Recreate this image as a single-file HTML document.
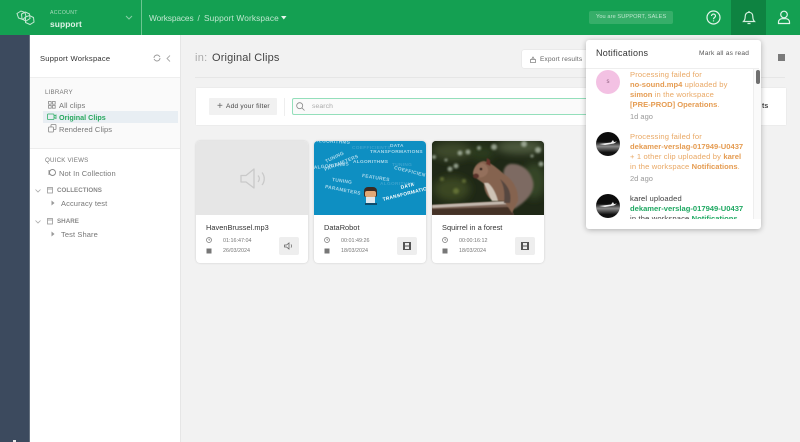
<!DOCTYPE html>
<html><head><meta charset="utf-8">
<style>
html,body{margin:0;padding:0;width:800px;height:442px;overflow:hidden;background:#f2f2f2;font-family:"Liberation Sans",sans-serif;color:#3a3a3a}
#w{position:absolute;left:0;top:0;width:800px;height:442px;overflow:hidden;background:#f2f2f2;filter:blur(.3px)}
.a{position:absolute;white-space:nowrap}
svg{position:absolute;overflow:visible}
.card{position:absolute;top:141px;width:112px;height:122px;background:#fff;border-radius:4px;box-shadow:0 0 2px rgba(0,0,0,.16);overflow:hidden}
.thumb{position:absolute;left:0;top:0;width:112px;height:74px;overflow:hidden}
.title{position:absolute;left:10px;top:82px;font-size:7.4px;color:#333;letter-spacing:.02px;white-space:nowrap}
.meta{position:absolute;left:27px;font-size:5.4px;color:#777;white-space:nowrap}
.btn{position:absolute;left:83px;top:96px;width:20px;height:18px;background:#eee;border-radius:2px}
.side{font-size:7.5px;color:#777;letter-spacing:.1px}
.head{font-size:6.2px;color:#777;letter-spacing:.2px}
.n{font-size:7.6px;line-height:10px;color:#e9a865;letter-spacing:.15px;position:absolute;left:44px;white-space:nowrap}
.n b{font-weight:bold;color:#e59c52;letter-spacing:0}
.ago{font-size:7.5px;color:#999;position:absolute;left:44px}
.w{position:absolute;color:rgba(205,232,245,.8);font-weight:bold;white-space:nowrap;font-size:4.800px;letter-spacing:.3px;transform-origin:left center}
.f{color:rgba(160,210,235,.3)}
</style></head><body><div id="w">

<!-- top bar -->
<div class="a" style="left:0;top:0;width:800px;height:35px;background:#14a052"></div>
<div class="a" style="left:141px;top:0;width:1px;height:35px;background:#6cc591"></div>
<svg style="left:16px;top:10px" width="19" height="16" fill="none" stroke="#c3e8d2" stroke-width="1"><path d="M1 3.500l4-2.500 4 1.500 1 4-3 3-4.500-1.500z"/><path d="M5.500 4l4-2 4 2 .5 4.500-4 2.500-4-2z"/><path d="M9.500 7l4-1.500 4 2 .5 4.500-4 2.500-4.500-2z"/></svg>
<div class="a" style="left:50px;top:10px;font-size:5.2px;color:#a9dcbd;letter-spacing:.3px">ACCOUNT</div>
<div class="a" style="left:50px;top:18.500px;font-size:8.400px;font-weight:bold;color:#dff3e7;letter-spacing:.1px">support</div>
<svg style="left:125px;top:15px" width="8" height="5" fill="none" stroke="#86cfa5" stroke-width="1"><path d="M1 1l3 3 3-3"/></svg>
<div class="a" style="left:149px;top:13px;font-size:8.300px;color:#bfe6cf;letter-spacing:-.1px">Workspaces</div>
<div class="a" style="left:197.500px;top:13px;font-size:8.300px;color:#bfe6cf">/</div>
<div class="a" style="left:204px;top:13px;font-size:8.300px;color:#bfe6cf;letter-spacing:.13px">Support Workspace</div>
<svg style="left:281px;top:16px" width="6" height="4" fill="#e6f6ec"><path d="M0 0h5.500l-2.700 3.500z"/></svg>
<div class="a" style="left:589px;top:11px;width:84px;height:13px;background:#36ae69;border-radius:2px"></div>
<div class="a" style="left:596px;top:14px;font-size:5.600px;color:#bfe8cf;letter-spacing:.1px">You are SUPPORT, SALES</div>
<svg style="left:706px;top:10px" width="15" height="15" fill="none" stroke="#e3f5ea" stroke-width="1.200"><circle cx="7.500" cy="7.500" r="6.500"/><path d="M5.500 6c0-2.600 4-2.600 4 0 0 1.500-2 1.500-2 3.200M7.500 10.400v1"/></svg>
<div class="a" style="left:731px;top:0;width:35px;height:35px;background:#0e8341"></div>
<svg style="left:742px;top:10px" width="14" height="15" fill="none" stroke="#d5efdf" stroke-width="1.200"><path d="M1.500 11.500c1.300-1.300 1.700-2.500 1.700-5 0-2.500 1.500-4.200 3.800-4.200s3.800 1.700 3.800 4.200c0 2.500.4 3.700 1.700 5z"/><path d="M5.500 13.500h3M7 1v1.300"/></svg>
<svg style="left:777px;top:10px" width="14" height="15" fill="none" stroke="#e3f5ea" stroke-width="1.200"><circle cx="7" cy="4.500" r="3.300"/><path d="M1.500 13.500v-1.500c0-2 2-3.300 3.500-3.300h4c1.500 0 3.500 1.300 3.500 3.300v1.500z"/></svg>

<!-- dark rail -->
<div class="a" style="left:0;top:35px;width:29px;height:407px;background:#3c4a5e"></div>
<div class="a" style="left:29px;top:35px;width:1px;height:407px;background:#65717f"></div>
<div class="a" style="left:13px;top:440px;width:3px;height:2px;background:#e8e8e8"></div>

<!-- sidebar -->
<div class="a" style="left:30px;top:35px;width:150px;height:407px;background:#fff"></div>
<div class="a" style="left:180px;top:35px;width:1px;height:407px;background:#e6e6e6"></div>
<div class="a" style="left:30px;top:77px;width:150px;height:71px;background:#fafafa"></div>
<div class="a" style="left:30px;top:77px;width:150px;height:1px;background:#eeeeee"></div>
<div class="a" style="left:30px;top:148px;width:150px;height:1px;background:#ececec"></div>
<div class="a" style="left:40px;top:54px;font-size:7.600px;color:#333;letter-spacing:.22px">Support Workspace</div>
<svg style="left:153px;top:54px" width="8" height="8" fill="none" stroke="#999" stroke-width=".9"><path d="M1 4a3 3 0 0 1 5-2.200L7 3M7 4a3 3 0 0 1-5 2.200L1 5"/></svg>
<svg style="left:166px;top:55px" width="5" height="7" fill="none" stroke="#aaa" stroke-width=".9"><path d="M4 .5L1 3.500l3 3"/></svg>

<div class="a head" style="left:45px;top:88.500px">LIBRARY</div>
<div class="a" style="left:43px;top:111px;width:135px;height:12px;background:#e8eef3"></div>
<svg style="left:48px;top:101px" width="8" height="8" fill="none" stroke="#888" stroke-width=".8"><rect x=".5" y=".5" width="2.700" height="2.700"/><rect x="4.500" y=".5" width="2.700" height="2.700"/><rect x=".5" y="4.500" width="2.700" height="2.700"/><rect x="4.500" y="4.500" width="2.700" height="2.700"/></svg>
<div class="a side" style="left:59px;top:100.500px">All clips</div>
<svg style="left:47px;top:113px" width="10" height="8" fill="none" stroke="#2eae66" stroke-width=".8"><rect x=".5" y="1" width="6.500" height="5.500" rx=".7"/><path d="M7 3l2-1v3.500l-2-1"/></svg>
<div class="a side" style="left:59px;top:112.500px;color:#27a85f;font-weight:bold;font-size:7.200px;letter-spacing:0">Original Clips</div>
<svg style="left:48px;top:124px" width="9" height="9" fill="none" stroke="#888" stroke-width=".8"><rect x="3" y=".5" width="5" height="5" rx=".7"/><rect x=".5" y="3" width="5" height="5" rx=".7" fill="#fafafa"/></svg>
<div class="a side" style="left:59px;top:124.500px">Rendered Clips</div>

<div class="a head" style="left:45px;top:156.500px">QUICK VIEWS</div>
<svg style="left:48px;top:168px" width="8" height="9" fill="none" stroke="#888" stroke-width=".9"><circle cx="4.500" cy="4.500" r="3"/><path d="M1 2v5"/></svg>
<div class="a side" style="left:59px;top:168.500px">Not In Collection</div>

<svg style="left:35px;top:189px" width="6" height="4" fill="none" stroke="#aaa" stroke-width=".8"><path d="M.5.5L3 3 5.500.5"/></svg>
<svg style="left:47px;top:186.500px" width="6" height="7" fill="none" stroke="#999" stroke-width=".8"><rect x=".5" y=".5" width="5" height="5.500"/><path d="M.5 2h5"/></svg>
<div class="a head" style="left:57px;top:186.500px;font-weight:bold;color:#888;letter-spacing:.05px">COLLECTIONS</div>
<svg style="left:51px;top:200px" width="4" height="6" fill="#999"><path d="M.5.5L3.500 3 .5 5.500z"/></svg>
<div class="a side" style="left:61px;top:198.500px">Accuracy test</div>

<svg style="left:35px;top:220px" width="6" height="4" fill="none" stroke="#aaa" stroke-width=".8"><path d="M.5.5L3 3 5.500.5"/></svg>
<svg style="left:47px;top:217.500px" width="6" height="7" fill="none" stroke="#999" stroke-width=".8"><rect x=".5" y=".5" width="5" height="5.500"/><path d="M.5 2h5"/></svg>
<div class="a head" style="left:57px;top:217.500px;font-weight:bold;color:#888;letter-spacing:.05px">SHARE</div>
<svg style="left:51px;top:231px" width="4" height="6" fill="#999"><path d="M.5.5L3.500 3 .5 5.500z"/></svg>
<div class="a side" style="left:61px;top:229.500px">Test Share</div>

<!-- main header -->
<div class="a" style="left:195px;top:52px;font-size:11px;color:#aaa;letter-spacing:.3px">in:</div>
<div class="a" style="left:212px;top:52px;font-size:11px;color:#444;letter-spacing:.15px">Original Clips</div>
<div class="a" style="left:522px;top:50px;width:70px;height:18px;background:#fff;box-shadow:0 0 1px rgba(0,0,0,.2);border-radius:2px"></div>
<svg style="left:530px;top:55.500px" width="6" height="7" fill="none" stroke="#888" stroke-width=".8"><path d="M.5 3.500h5v3h-5zM1.500 3.500L3 1l1.500 2.500"/></svg>
<div class="a" style="left:540px;top:55.500px;font-size:6.500px;color:#666;letter-spacing:.18px">Export results</div>
<div class="a" style="left:195px;top:77px;width:590px;height:1px;background:#e6e6e6"></div>
<div class="a" style="left:778px;top:54px;width:7px;height:7px;background:#7a7a7a"></div>

<!-- filter panel -->
<div class="a" style="left:196px;top:88px;width:590px;height:37px;background:#fff;box-shadow:0 0 1px rgba(0,0,0,.12)"></div>
<div class="a" style="left:209px;top:98px;width:68px;height:17px;background:#f1f1f1;border-radius:1px"></div>
<div class="a" style="left:217px;top:100.500px;font-size:10px;color:#666">+</div>
<div class="a" style="left:226px;top:102.500px;font-size:6.500px;color:#444;letter-spacing:.25px">Add your filter</div>
<div class="a" style="left:284px;top:98px;width:1px;height:18px;background:#eee"></div>
<div class="a" style="left:292px;top:98px;width:320px;height:14.500px;background:#fafafa;border:1.500px solid #94dfbb;border-radius:2px"></div>
<svg style="left:296px;top:102px" width="9" height="9" fill="none" stroke="#888" stroke-width=".8"><circle cx="3.700" cy="3.700" r="3"/><path d="M6 6l2.500 2.500"/></svg>
<div class="a" style="left:312px;top:102.500px;font-size:6.800px;color:#aaa;letter-spacing:.1px">search</div>
<div class="a" style="left:762px;top:103px;font-size:7px;color:#444;font-weight:bold">ts</div>

<!-- card 1 -->
<div class="card" style="left:196px">
  <div class="thumb" style="background:#e6e6e6">
    <svg style="left:44px;top:27px" width="28" height="22" fill="none" stroke="#c9c9c9" stroke-width="1.300"><path d="M1 7.500h5L14 1v19l-8-6H1z" stroke-linejoin="round"/><path d="M18 7.500c1.800 2 1.800 4.500 0 6.500M22 4.500c3 3.500 3 9 0 12.500"/></svg>
  </div>
  <div class="title">HavenBrussel.mp3</div>
  <svg style="left:10px;top:96px" width="6" height="6" fill="none" stroke="#777" stroke-width=".7"><circle cx="3" cy="3" r="2.500"/><path d="M3 1.500V3h1.200"/></svg>
  <div class="meta" style="top:96.500px">01:16:47:04</div>
  <svg style="left:10px;top:107px" width="6" height="6" fill="#777"><path d="M.5.5h5v5h-5z"/></svg>
  <div class="meta" style="top:106.500px">26/03/2024</div>
  <div class="btn"><svg style="left:5px;top:5px" width="10" height="8" fill="none" stroke="#666" stroke-width=".8"><path d="M.5 3h2L5 1v6L2.500 5h-2zM7 2.500c.7.8.7 2.200 0 3"/></svg></div>
</div>

<!-- card 2 -->
<div class="card" style="left:314px">
  <div class="thumb" style="background:#0e8fc2">
    <div class="w f" style="left:38px;top:5px">COEFFICIENTS</div>
    <div class="w f" style="left:78px;top:22px">TUNING</div>
    <div class="w f" style="left:66px;top:41px">ALGORITHMS</div>
    <div class="w" style="left:1px;top:-2px;transform:rotate(3deg)">ALGORITHMS</div>
    <div class="w" style="left:76px;top:3px">DATA</div>
    <div class="w" style="left:56px;top:9px">TRANSFORMATIONS</div>
    <div class="w" style="left:12px;top:19px;transform:rotate(-26deg)">TUNING</div>
    <div class="w" style="left:11px;top:27px;transform:rotate(-22deg)">PARAMETERS</div>
    <div class="w" style="left:0;top:25px;transform:rotate(-6deg)">ALGORITHMS</div>
    <div class="w" style="left:39px;top:19px">ALGORITHMS</div>
    <div class="w" style="left:80px;top:25px;transform:rotate(14deg)">COEFFICIENTS</div>
    <div class="w" style="left:48px;top:33px;transform:rotate(9deg)">FEATURES</div>
    <div class="w" style="left:18px;top:37px;transform:rotate(8deg)">TUNING</div>
    <div class="w" style="left:11px;top:44px;transform:rotate(11deg)">PARAMETERS</div>
    <div class="w" style="left:87px;top:45px;transform:rotate(-14deg);color:#fff">DATA</div>
    <div class="w" style="left:69px;top:57px;transform:rotate(-14deg);color:#fff">TRANSFORMATIONS</div>
    <div class="a" style="left:50px;top:46px;width:13px;height:10px;background:#3a2a22;border-radius:4px 4px 2px 2px"></div>
    <div class="a" style="left:51px;top:50px;width:11px;height:6px;background:#e0a876;border-radius:2px"></div>
    <div class="a" style="left:52px;top:56px;width:9px;height:6px;background:#dfe8ee"></div>
    <div class="a" style="left:51px;top:62px;width:12px;height:2px;background:#123;opacity:.6"></div>
  </div>
  <div class="title">DataRobot</div>
  <svg style="left:10px;top:96px" width="6" height="6" fill="none" stroke="#777" stroke-width=".7"><circle cx="3" cy="3" r="2.500"/><path d="M3 1.500V3h1.200"/></svg>
  <div class="meta" style="top:96.500px">00:01:49:26</div>
  <svg style="left:10px;top:107px" width="6" height="6" fill="#777"><path d="M.5.5h5v5h-5z"/></svg>
  <div class="meta" style="top:106.500px">18/03/2024</div>
  <div class="btn"><svg style="left:6px;top:5px" width="8" height="8" fill="#555"><path d="M0 0h8v8H0z"/><path d="M2 1h4v2.500H2zM2 4.500h4V7H2z" fill="#eee"/></svg></div>
</div>

<!-- card 3 -->
<div class="card" style="left:432px">
  <div class="thumb" style="background:#2b3320">
    <svg style="left:0;top:0" width="112" height="74">
      <defs><filter id="b"><feGaussianBlur stdDeviation="4"/></filter><filter id="c"><feGaussianBlur stdDeviation="1.100"/></filter><filter id="d"><feGaussianBlur stdDeviation=".6"/></filter></defs>
      <rect width="112" height="74" fill="#1f2816"/>
      <g filter="url(#b)">
        <ellipse cx="20" cy="10" rx="20" ry="9" fill="#3e4a2a"/>
        <ellipse cx="88" cy="6" rx="24" ry="7" fill="#4d5a3c"/>
        <ellipse cx="20" cy="48" rx="18" ry="12" fill="#3a4620"/>
        <ellipse cx="102" cy="40" rx="12" ry="18" fill="#364527"/>
        <ellipse cx="50" cy="12" rx="12" ry="8" fill="#2c3a1a"/>
      </g>
      <g filter="url(#c)" fill="#a7b3a0" opacity=".85">
        <circle cx="2" cy="16" r="2"/><circle cx="28" cy="12" r="2.500"/><circle cx="36" cy="11" r="2.500"/><circle cx="47" cy="7" r="2"/><circle cx="62" cy="6" r="3"/><circle cx="24" cy="25" r="2.500"/><circle cx="18" cy="28" r="2.500"/><circle cx="92" cy="3" r="3"/><circle cx="106" cy="9" r="3"/><circle cx="109" cy="23" r="2.500"/><circle cx="14" cy="19" r="1.500"/><circle cx="100" cy="15" r="1.500"/>
      </g>
      <g filter="url(#c)" fill="#6d7a3a" opacity=".8"><circle cx="24" cy="50" r="3"/><circle cx="10" cy="38" r="2"/><circle cx="32" cy="40" r="2"/></g>
      <path d="M0 64L75 60 82 74H0z" fill="#7a6254" filter="url(#d)"/>
      <path d="M0 68L78 66 82 74H0z" fill="#443228" filter="url(#d)"/>
      <path d="M0 64L75 60 77 63 0 67z" fill="#c2b7ad" filter="url(#d)"/>
      <g filter="url(#c)">
        <path d="M82 68C92 62 104 52 101 40 98 28 88 22 78 23 70 25 70 36 74 44Z" fill="#7d6a62"/>
      </g>
      <g filter="url(#d)">
        <path d="M52 20C44 21 41 28 41 33 43 38 48 39 52 43 52 50 56 58 62 60L72 60 80 72 86 60C87 48 80 38 72 33 66 28 60 22 52 20Z" fill="#85634f"/>
        <path d="M50 22C44 24 41 29 41 33 44 37 50 38 54 34 58 30 56 24 50 22Z" fill="#94705c"/>
        <path d="M52 42C55 48 57 55 60 60L66 60C64 52 60 45 56 42Z" fill="#cfc3b5"/>
        <path d="M54 23l1-6 3 2 .5 6z" fill="#6b322c"/>
        <circle cx="49" cy="28" r="1.300" fill="#171010"/>
        <ellipse cx="44" cy="35" rx="3" ry="2.500" fill="#5a322a"/>
        <path d="M68 38C76 44 80 52 78 62L72 62C73 52 72 45 68 38Z" fill="#57463f"/>
      </g>
    </svg>
  </div>
  <div class="title">Squirrel in a forest</div>
  <svg style="left:10px;top:96px" width="6" height="6" fill="none" stroke="#777" stroke-width=".7"><circle cx="3" cy="3" r="2.500"/><path d="M3 1.500V3h1.200"/></svg>
  <div class="meta" style="top:96.500px">00:00:16:12</div>
  <svg style="left:10px;top:107px" width="6" height="6" fill="#777"><path d="M.5.5h5v5h-5z"/></svg>
  <div class="meta" style="top:106.500px">18/03/2024</div>
  <div class="btn"><svg style="left:6px;top:5px" width="8" height="8" fill="#555"><path d="M0 0h8v8H0z"/><path d="M2 1h4v2.500H2zM2 4.500h4V7H2z" fill="#eee"/></svg></div>
</div>

<!-- notifications -->
<div class="a" style="left:586px;top:40px;width:175px;height:189px;background:#fff;border-radius:3px;box-shadow:0 1px 6px rgba(0,0,0,.28);overflow:hidden">
  <div class="a" style="left:10px;top:8px;font-size:9px;color:#333;letter-spacing:.25px">Notifications</div>
  <div class="a" style="left:113px;top:9.500px;font-size:6.600px;color:#555;letter-spacing:.2px">Mark all as read</div>
  <div class="a" style="left:0;top:28px;width:173px;height:1px;background:#eee"></div>
  <div class="a" style="left:0;top:29px;width:167px;height:150px;overflow:hidden">
    <div class="a" style="left:10px;top:1px;width:24px;height:24px;border-radius:50%;background:#f3c1e3;color:#8a5a7a;font-size:6px;text-align:center;line-height:24px">s</div>
    <div class="n" style="top:1px">Processing failed for<br><b>no-sound.mp4</b> uploaded by<br><b>simon</b> in the workspace<br><b>[PRE-PROD] Operations</b>.</div>
    <div class="ago" style="top:43px">1d ago</div>

    <div class="a" style="left:10px;top:63px;width:24px;height:24px;border-radius:50%;background:linear-gradient(#0c0c0c 40%,#8a8a8a 60%,#111 85%)"></div>
    <svg style="left:13px;top:70px" width="18" height="8" fill="#eee"><path d="M0 5l12-1.500L14 1l1 2 3-.5-3 2-9 1.500z"/></svg>
    <div class="n" style="top:63px">Processing failed for<br><b>dekamer-verslag-017949-U0437</b><br>+ 1 other clip uploaded by <b>karel</b><br>in the workspace <b>Notifications</b>.</div>
    <div class="ago" style="top:104.500px">2d ago</div>

    <div class="a" style="left:10px;top:125px;width:24px;height:24px;border-radius:50%;background:linear-gradient(#0c0c0c 40%,#8a8a8a 60%,#111 85%)"></div>
    <svg style="left:13px;top:132px" width="18" height="8" fill="#eee"><path d="M0 5l12-1.500L14 1l1 2 3-.5-3 2-9 1.500z"/></svg>
    <div class="n" style="top:125px;color:#444"><span style="color:#333">karel</span> uploaded<br><b style="color:#1fa862">dekamer-verslag-017949-U0437</b><br>in the workspace <b style="color:#1fa862">Notifications</b></div>
  </div>
  <div class="a" style="left:167px;top:29px;width:8px;height:150px;background:#fafafa;border-left:1px solid #eee"></div>
  <div class="a" style="left:170px;top:30px;width:4px;height:14px;background:#6f6f6f;border-radius:2px"></div>
</div>
</div></body></html>
